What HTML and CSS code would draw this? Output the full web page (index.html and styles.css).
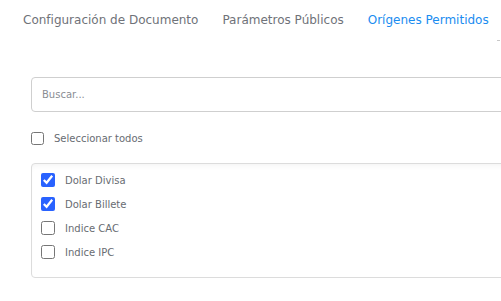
FILE: index.html
```html
<!DOCTYPE html>
<html lang="es">
<head>
    <meta charset="UTF-8">
    <meta name="viewport" content="width=device-width, initial-scale=1.0">
    <title>Orígenes Permitidos</title>
    <link rel="stylesheet" href="styles.css">
</head>
<body>
    <div class="page">
        <!-- Tabs -->
        <nav class="tabs">
            <a class="tab">Configuración de Documento</a>
            <a class="tab">Parámetros Públicos</a>
            <a class="tab active">Orígenes Permitidos</a>
            <span class="tab-more"></span>
        </nav>

        <!-- Origins panel -->
        <div class="panel">
            <input type="text" class="search" placeholder="Buscar...">

            <label class="check-row select-all">
                <input type="checkbox">
                <span>Seleccionar todos</span>
            </label>

            <div class="origin-list">
                <label class="check-row">
                    <input type="checkbox" checked>
                    <span>Dolar Divisa</span>
                </label>
                <label class="check-row">
                    <input type="checkbox" checked>
                    <span>Dolar Billete</span>
                </label>
                <label class="check-row">
                    <input type="checkbox">
                    <span>Indice CAC</span>
                </label>
                <label class="check-row">
                    <input type="checkbox">
                    <span>Indice IPC</span>
                </label>
            </div>
        </div>
    </div>
</body>
</html>
```

FILE: styles.css
```css
body {
    margin: 0;
    font-family: "DejaVu Sans", sans-serif;
    background: #fff;
}

.page {
    width: 501px;
    overflow: hidden;
}

/* Tabs */
.tabs {
    display: flex;
    align-items: center;
    height: 40px;
    padding-left: 11px;
}

.tab {
    padding: 0 12px;
    font-size: 12px;
    color: #6f7279;
    cursor: pointer;
    white-space: nowrap;
}

.tab.active {
    color: #1a8cf0;
}

.tab-more {
    flex: none;
    margin-left: -4px;
    margin-top: 40px;
    width: 3px;
    height: 1px;
    background: #c8c8c8;
}

/* Panel */
.panel {
    padding: 37px 0 0 31px;
    overflow: hidden;
}

.search {
    display: block;
    box-sizing: border-box;
    width: 490px;
    height: 35px;
    padding: 0 10px;
    border: 1px solid #cfcfcf;
    border-radius: 4px;
    font-family: inherit;
    font-size: 10px;
    outline: none;
}

.search::placeholder {
    color: #8a8d93;
}

.check-row {
    display: flex;
    align-items: center;
    gap: 10px;
    font-size: 10px;
    color: #686c72;
}

.check-row input {
    margin: 0;
    width: 13px;
    height: 13px;
    accent-color: #2962ff;
}

.select-all {
    margin-top: 20px;
    height: 13px;
}

.origin-list {
    margin-top: 18px;
    width: 490px;
    box-sizing: border-box;
    height: 115px;
    padding: 9px 0 0 9px;
    border: 1px solid #dcdcdc;
    border-radius: 4px;
    box-shadow: inset 0 5px 6px -4px rgba(0, 0, 0, 0.06);
}

.origin-list .check-row {
    height: 14px;
    margin-bottom: 10px;
}

.origin-list .check-row input {
    width: 14px;
    height: 14px;
}
```
